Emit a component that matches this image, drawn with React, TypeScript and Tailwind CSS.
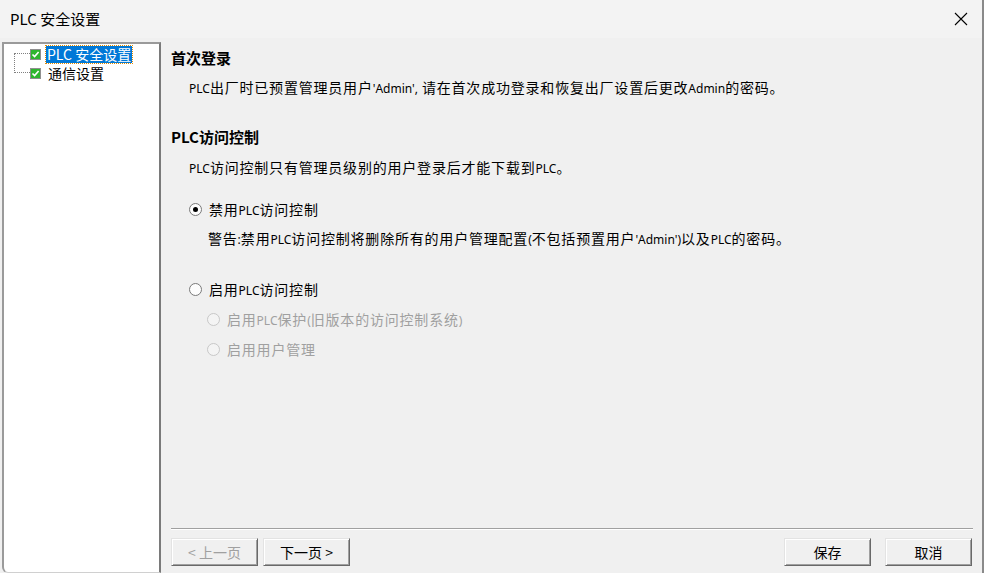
import React from "react";

const cjk = { fontFamily: '"Noto Sans CJK SC", "Noto Sans", sans-serif' };

function T({ s }: { s: string }) {
  const parts = s.split(/([A-Za-z'(),:]+)/);
  return (
    <span>
      {parts.map((p, i) =>
        /^[A-Za-z'(),:]+$/.test(p) ? (
          <span key={i} className="text-[12px] tracking-normal" style={{ fontFamily: '"Noto Sans", sans-serif' }}>
            {p}
          </span>
        ) : (
          <span key={i}>{p}</span>
        )
      )}
    </span>
  );
}

function Check() {
  return (
    <span className="inline-flex items-center justify-center w-[11px] h-[11px] border border-[#8f8f8f] bg-[#2fb52f]">
      <svg width="9" height="9" viewBox="0 0 9 9">
        <path d="M1.5 4.5 L3.6 6.6 L7.6 2" stroke="#fff" strokeWidth="1.6" fill="none" />
      </svg>
    </span>
  );
}

function Radio({ checked, disabled }: { checked?: boolean; disabled?: boolean }) {
  return (
    <span
      className={
        "inline-flex items-center justify-center w-[13px] h-[13px] rounded-full border " +
        (disabled ? "border-[#c8c8c8] bg-[#f4f4f4]" : "border-[#7a7a7a] bg-[#fdfdfd]")
      }
    >
      {checked && <span className="w-[5px] h-[5px] rounded-full bg-black" />}
    </span>
  );
}

function Btn({ children, disabled }: { children: React.ReactNode; disabled?: boolean }) {
  return (
    <div
      className={
        "w-[87px] h-[28px] flex items-center justify-center text-[14px] bg-[#f0f0f0] border border-t-[#e3e3e3] border-l-[#e3e3e3] border-b-[#696969] border-r-[#696969] shadow-[inset_1px_1px_0_#ffffff,inset_-1px_-1px_0_#a0a0a0] " +
        (disabled ? "text-[#a0a0a0]" : "text-black")
      }
      style={cjk}
    >
      {children}
    </div>
  );
}

const row = "h-[20px] flex items-center shrink-0 whitespace-nowrap";

export default function App() {
  return (
    <div className="w-[984px] h-[573px] bg-[#f0f0f0] flex flex-col overflow-hidden border-r-2 border-[#8a8a8a]" style={cjk}>
      <div className="h-[38px] flex items-center justify-between bg-[#f3f3f3] pl-[10px] pr-[14px]">
        <span className="text-[15px] text-black">PLC 安全设置</span>
        <svg width="14" height="14" viewBox="0 0 14 14">
          <path d="M1 1 L13 13 M13 1 L1 13" stroke="#000" strokeWidth="1.1" />
        </svg>
      </div>
      <div className="flex-1 flex pt-[4px] pl-[2px] min-h-0">
        <div className="w-[159px] bg-white border-l-2 border-t-2 border-r-2 border-[#9a9a9a] border-r-[#7a7a7a] border-b border-b-[#d0d0d0] rounded-bl-[6px] pt-[1px] pl-[8px]">
          <div className="flex">
            <div className="w-[18px] relative">
              <div className="absolute left-[2px] top-[8px] h-[20px] border-l border-dotted border-[#808080]" />
              <div className="absolute left-[2px] top-[8px] w-[16px] border-t border-dotted border-[#808080]" />
              <div className="absolute left-[2px] top-[27px] w-[16px] border-t border-dotted border-[#808080]" />
            </div>
            <div className="flex flex-col">
              <div className="h-[18px] flex items-center gap-[5px]">
                <Check />
                <span className="inline-block h-[17px] text-[14px] leading-[17px] px-[1px] bg-[#0078d7] text-white outline outline-1 outline-dotted outline-[#e08a00]">PLC 安全设置</span>
              </div>
              <div className="h-[19px] pt-[1px] flex items-center gap-[7px]">
                <Check />
                <span className="inline-block h-[17px] text-[14px] leading-[17px] text-black">通信设置</span>
              </div>
            </div>
          </div>
        </div>
        <div className="flex-1 flex flex-col pl-[10px] pr-[10px] pb-[7px] text-[14px] tracking-[0.8px] text-black">
          <div className={row + " text-[15px] font-bold tracking-normal mt-[6px]"}>首次登录</div>
          <div className={row + " pl-[18px] mt-[9px]"}>
            <T s="PLC出厂时已预置管理员用户'Admin', 请在首次成功登录和恢复出厂设置后更改Admin的密码。" />
          </div>
          <div className={row + " text-[15px] font-bold tracking-normal mt-[30px]"}>PLC访问控制</div>
          <div className={row + " pl-[18px] mt-[10px]"}>
            <T s="PLC访问控制只有管理员级别的用户登录后才能下载到PLC。" />
          </div>
          <div className={row + " gap-[7px] pl-[18px] mt-[22px]"}>
            <Radio checked />
            <T s="禁用PLC访问控制" />
          </div>
          <div className={row + " pl-[37px] mt-[9px]"}>
            <T s="警告:禁用PLC访问控制将删除所有的用户管理配置(不包括预置用户'Admin')以及PLC的密码。" />
          </div>
          <div className={row + " gap-[7px] pl-[18px] mt-[31px]"}>
            <Radio />
            <T s="启用PLC访问控制" />
          </div>
          <div className={row + " gap-[7px] pl-[36px] mt-[10px] text-[#a0a0a0]"}>
            <Radio disabled />
            <T s="启用PLC保护(旧版本的访问控制系统)" />
          </div>
          <div className={row + " gap-[7px] pl-[36px] mt-[10px] text-[#a0a0a0]"}>
            <Radio disabled />
            <span>启用用户管理</span>
          </div>
          <div className="flex-1" />
          <div className="border-t border-[#a0a0a0] border-b border-b-white mr-[-1px]" />
          <div className="flex items-center mt-[8px] gap-[5px] tracking-normal">
            <Btn disabled>&lt; 上一页</Btn>
            <Btn>下一页 &gt;</Btn>
            <div className="flex-1" />
            <Btn>保存</Btn>
            <div className="w-[4px]" />
            <Btn>取消</Btn>
          </div>
        </div>
      </div>
    </div>
  );
}
